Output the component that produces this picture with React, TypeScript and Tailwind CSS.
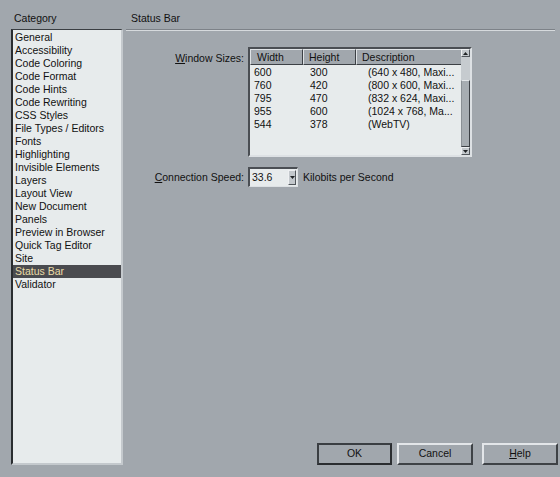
import React from "react";

const categories = [
  "General",
  "Accessibility",
  "Code Coloring",
  "Code Format",
  "Code Hints",
  "Code Rewriting",
  "CSS Styles",
  "File Types / Editors",
  "Fonts",
  "Highlighting",
  "Invisible Elements",
  "Layers",
  "Layout View",
  "New Document",
  "Panels",
  "Preview in Browser",
  "Quick Tag Editor",
  "Site",
  "Status Bar",
  "Validator",
];

const sizes = [
  ["600", "300", "(640 x 480, Maxi..."],
  ["760", "420", "(800 x 600, Maxi..."],
  ["795", "470", "(832 x 624, Maxi..."],
  ["955", "600", "(1024 x 768, Ma..."],
  ["544", "378", "(WebTV)"],
];

function HeaderCell({ w, label, pl }: { w: string; label: string; pl: string }) {
  return (
    <div
      className={`${w} ${pl} h-[16px] shrink-0 flex items-center bg-[#a1a7ad] border-t border-l border-t-[#dfe3e6] border-l-[#dfe3e6] border-r border-b border-r-[#3c4045] border-b-[#3c4045] leading-none`}
    >
      {label}
    </div>
  );
}

function Arrow({ up }: { up: boolean }) {
  return (
    <svg width="5" height="3" viewBox="0 0 5 3" className="block">
      {up ? <path d="M2.5 0 L5 3 L0 3 Z" fill="#202326" /> : <path d="M0 0 L5 0 L2.5 3 Z" fill="#202326" />}
    </svg>
  );
}

function ScrollButton({ up }: { up: boolean }) {
  return (
    <div className="h-[8px] w-full flex items-center justify-center bg-[#c3c8cc] border border-t-[#eef0f2] border-l-[#eef0f2] border-r-[#50555a] border-b-[#50555a]">
      <Arrow up={up} />
    </div>
  );
}

function Btn({ label, def, ul, cls }: { label: string; def?: boolean; ul?: string; cls: string }) {
  const rest = ul ? label.slice(1) : label;
  return (
    <button
      className={`${cls} h-[22px] flex items-center justify-center bg-[#a1a7ad] ${
        def
          ? "border-2 border-t-[#3a3e42] border-l-[#3a3e42] border-r-[#2a2d30] border-b-[#2a2d30]"
          : "border-2 border-t-[#e3e6e9] border-l-[#e3e6e9] border-r-[#3e4246] border-b-[#3e4246]"
      }`}
    >
      {ul ? (
        <span>
          <span className="underline">{ul}</span>
          {rest}
        </span>
      ) : (
        label
      )}
    </button>
  );
}

export default function App() {
  return (
    <div
      className="w-[560px] h-[477px] flex bg-[#a1a7ad] text-[10.5px] text-[#111] overflow-hidden"
      style={{ fontFamily: '"Liberation Sans", Arial, sans-serif' }}
    >
      {/* Category column */}
      <div className="w-[126px] shrink-0 flex flex-col pl-[11px]">
        <div className="h-[29px] pl-[3px] pt-[11px] leading-[14px]">Category</div>
        <div className="w-[112px] h-[436px] bg-[#e7ebec] border-t border-l-2 border-t-[#3a3e42] border-l-[#2a2d30] border-r-2 border-b-2 border-r-[#c4c9cd] border-b-[#c4c9cd] pt-[1px]">
          {categories.map((c) => {
            const sel = c === "Status Bar";
            return (
              <div
                key={c}
                className={`h-[13px] leading-[13px] pl-[2px] whitespace-nowrap ${
                  sel ? "bg-[#4a4b4f] text-[#eadca6]" : ""
                }`}
              >
                {c}
              </div>
            );
          })}
        </div>
      </div>

      {/* Settings panel */}
      <div className="flex-1 flex flex-col">
        <div className="h-[29px] pl-[5px] pt-[11px] leading-[14px]">Status Bar</div>
        <div className="mr-[5px] h-[2px] border-t border-t-[#7d8288] border-b border-b-[#d6dadd]" />

        <div className="flex mt-[16px]">
          <div className="w-[118px] shrink-0 text-right pt-[4px] leading-[14px]">
            <span className="underline">W</span>indow Sizes:
          </div>
          <div className="ml-[4px] w-[224px] h-[110px] flex border-t-2 border-l-2 border-t-[#4a4e53] border-l-[#4a4e53] border-r-2 border-b-2 border-r-[#dde1e4] border-b-[#dde1e4] bg-[#e7ebec]">
            <div className="flex-1 flex flex-col overflow-hidden">
              <div className="flex">
                <HeaderCell w="w-[53px]" pl="pl-[6px]" label="Width" />
                <HeaderCell w="w-[53px]" pl="pl-[5px]" label="Height" />
                <HeaderCell w="w-[106px]" pl="pl-[5px]" label="Description" />
              </div>
              <div className="pt-[1px]">
                {sizes.map(([w, h, d]) => (
                  <div key={w} className="flex h-[13px] leading-[13px]">
                    <div className="w-[60px] pl-[4px]">{w}</div>
                    <div className="w-[58px]">{h}</div>
                    <div className="whitespace-nowrap">{d}</div>
                  </div>
                ))}
              </div>
            </div>
            <div className="w-[9px] shrink-0 flex flex-col bg-[#c6cbcf]">
              <ScrollButton up />
              <div className="h-[23px]" />
              <div className="flex-1 bg-[#a7adb2] border border-t-[#e3e6e9] border-l-[#8a9095] border-r-[#3c4045] border-b-[#3c4045]" />
              <ScrollButton up={false} />
            </div>
          </div>
        </div>

        <div className="flex items-center mt-[10px]">
          <div className="w-[118px] shrink-0 text-right leading-[14px]">
            <span className="underline">C</span>onnection Speed:
          </div>
          <div className="ml-[4px] w-[50px] h-[20px] flex bg-[#e7ebec] border-t-2 border-l-2 border-t-[#4a4e53] border-l-[#4a4e53] border-r border-b border-r-[#dde1e4] border-b-[#dde1e4]">
            <div className="flex-1 pl-[2px] leading-[16px]">33.6</div>
            <div className="w-[8px] my-[1px] mr-[1px] flex items-center justify-center bg-[#c3c8cc] border border-t-[#eef0f2] border-l-[#eef0f2] border-r-[#50555a] border-b-[#50555a]">
              <Arrow up={false} />
            </div>
          </div>
          <div className="ml-[5px] leading-[14px]">Kilobits per Second</div>
        </div>

        <div className="mt-auto mb-[12px] mr-[2px] flex justify-end">
          <Btn label="OK" def cls="w-[75px] mr-[5px]" />
          <Btn label="Cancel" cls="w-[76px] mr-[9px]" />
          <Btn label="Help" ul="H" cls="w-[76px]" />
        </div>
      </div>
    </div>
  );
}
